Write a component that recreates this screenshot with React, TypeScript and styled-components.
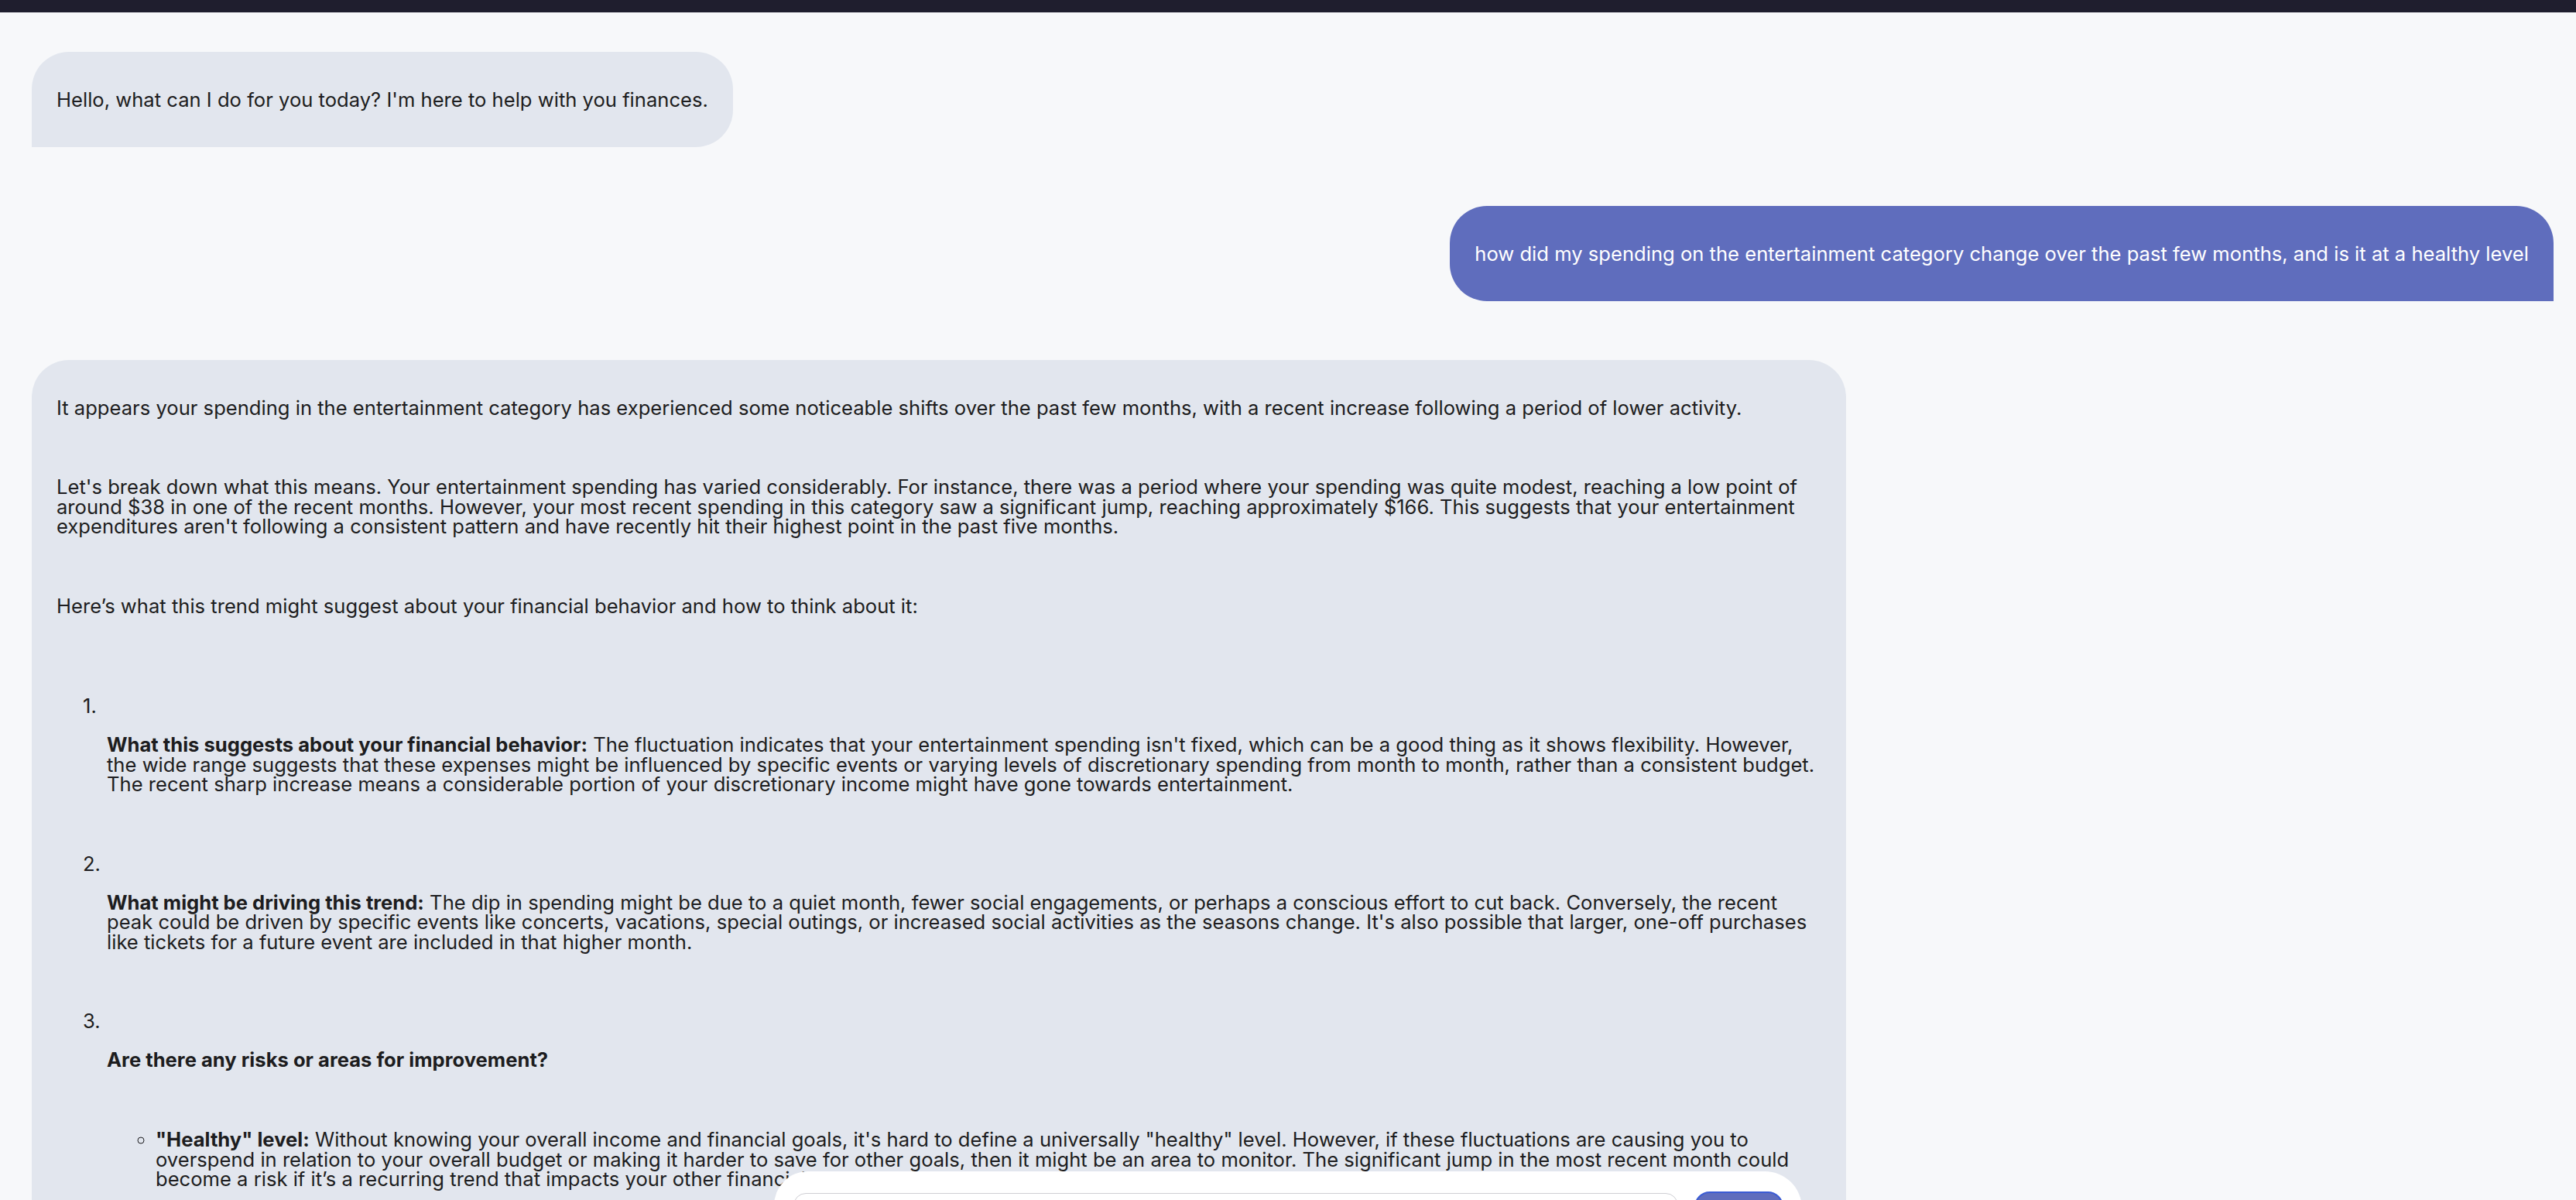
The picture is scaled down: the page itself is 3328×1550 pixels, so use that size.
import styled, { createGlobalStyle } from 'styled-components';

type Sender = 'bot' | 'user';

const GlobalStyle = createGlobalStyle`
  html, body {
    margin: 0;
    padding: 0;
    height: 100%;
    overflow: hidden;
  }
  body {
    background: #f7f8fa;
    font-family: Inter, "Noto Sans", "Liberation Sans", sans-serif;
    color: #1d1d20;
  }
`;

const App = () => {
    return (
        <>
            <GlobalStyle />
            <TopBar />
            <Thread>
                <Bubble $from="bot">
                    <Para>Hello, what can I do for you today? I'm here to help with you finances.</Para>
                </Bubble>
                <Bubble $from="user">
                    <Para>how did my spending on the entertainment category change over the past few months, and is it at a healthy level</Para>
                </Bubble>
                <Bubble $from="bot">
                    <Para>It appears your spending in the entertainment category has experienced some noticeable shifts over the past few months, with a recent increase following a period of lower activity.</Para>
                    <Para>Let's break down what this means. Your entertainment spending has varied considerably. For instance, there was a period where your spending was quite modest, reaching a low point of around $38 in one of the recent months. However, your most recent spending in this category saw a significant jump, reaching approximately $166. This suggests that your entertainment expenditures aren't following a consistent pattern and have recently hit their highest point in the past five months.</Para>
                    <Para>Here’s what this trend might suggest about your financial behavior and how to think about it:</Para>
                    <Steps>
                        <Step>
                            <Marker>1.</Marker>
                            <StepBody>
                                <Para><strong>What this suggests about your financial behavior:</strong> The fluctuation indicates that your entertainment spending isn't fixed, which can be a good thing as it shows flexibility. However, the wide range suggests that these expenses might be influenced by specific events or varying levels of discretionary spending from month to month, rather than a consistent budget. The recent sharp increase means a considerable portion of your discretionary income might have gone towards entertainment.</Para>
                            </StepBody>
                        </Step>
                        <Step>
                            <Marker>2.</Marker>
                            <StepBody>
                                <Para><strong>What might be driving this trend:</strong> The dip in spending might be due to a quiet month, fewer social engagements, or perhaps a conscious effort to cut back. Conversely, the recent peak could be driven by specific events like concerts, vacations, special outings, or increased social activities as the seasons change. It's also possible that larger, one-off purchases like tickets for a future event are included in that higher month.</Para>
                            </StepBody>
                        </Step>
                        <Step>
                            <Marker>3.</Marker>
                            <StepBody>
                                <Para><strong>Are there any risks or areas for improvement?</strong></Para>
                                <Bullets>
                                    <li>
                                        <Para><strong>"Healthy" level:</strong> Without knowing your overall income and financial goals, it's hard to define a universally "healthy" level. However, if these fluctuations are causing you to overspend in relation to your overall budget or making it harder to save for other goals, then it might be an area to monitor. The significant jump in the most recent month could become a risk if it’s a recurring trend that impacts your other financial goals.</Para>
                                    </li>
                                    <li>
                                        <Para><strong>Opportunities:</strong> Setting a monthly entertainment budget could help you enjoy these activities while keeping the rest of your plans on track.</Para>
                                    </li>
                                </Bullets>
                            </StepBody>
                        </Step>
                    </Steps>
                </Bubble>
            </Thread>
            <Composer onSubmit={e => e.preventDefault()}>
                <MessageInput placeholder="Ask about your finances..." />
                <SendButton type="submit">Send</SendButton>
            </Composer>
        </>
    );
};

// Styled Components for the chat page
const TopBar = styled.div`
    height: 16px;
    background: #1f1e2e;
`;

const Thread = styled.main`
    display: flex;
    flex-direction: column;
    gap: 76.5px;
    padding: 51px 29px 240px 41px;
`;

const Bubble = styled.div<{ $from: Sender }>`
    align-self: ${p => (p.$from === 'user' ? 'flex-end' : 'flex-start')};
    box-sizing: border-box;
    max-width: 2344px;
    padding: 24px 32px;
    background: ${p => (p.$from === 'user' ? '#5f6dbd' : '#e2e6ee')};
    color: ${p => (p.$from === 'user' ? '#ffffff' : '#1d1d20')};
    border-radius: ${p => (p.$from === 'user' ? '48px 48px 0 48px' : '48px 48px 48px 0')};
    font-size: 25.6px;
    line-height: 25.5px;
`;

const Para = styled.p`
    margin: 24.5px 0;

    & + & {
        margin-top: 77px;
    }

    strong {
        font-weight: 700;
    }
`;

const Steps = styled.ol`
    list-style: none;
    margin: 104px 0 0;
    padding: 0 0 0 34px;
`;

const Step = styled.li`
    & + & {
        margin-top: 77px;
    }
`;

const Marker = styled.div`
    height: 25.5px;
`;

const StepBody = styled.div`
    padding-left: 31px;
`;

const Bullets = styled.ul`
    list-style: circle;
    margin: 77.5px 0 0;
    padding-left: 63px;

    li + li {
        margin-top: 77px;
    }
`;

const Composer = styled.form`
    position: fixed;
    left: 50%;
    top: calc(100vh - 37px);
    transform: translateX(-50%);
    box-sizing: border-box;
    width: 1328px;
    display: flex;
    align-items: center;
    gap: 21px;
    padding: 26px 24px 26px 25px;
    background: #ffffff;
    border-radius: 44px 48px 0 0;
`;

const MessageInput = styled.input`
    flex: 1;
    height: 56px;
    box-sizing: border-box;
    padding: 0 20px;
    border: 1px solid #cfcfd4;
    border-radius: 16px;
    background: #ffffff;
    font: inherit;
    font-size: 24px;
`;

const SendButton = styled.button`
    width: 115px;
    height: 60px;
    border: 2px solid #3a5bd4;
    border-radius: 20px;
    background: #5f6dbd;
    color: #ffffff;
    font: inherit;
    font-size: 24px;
`;

export default App;
